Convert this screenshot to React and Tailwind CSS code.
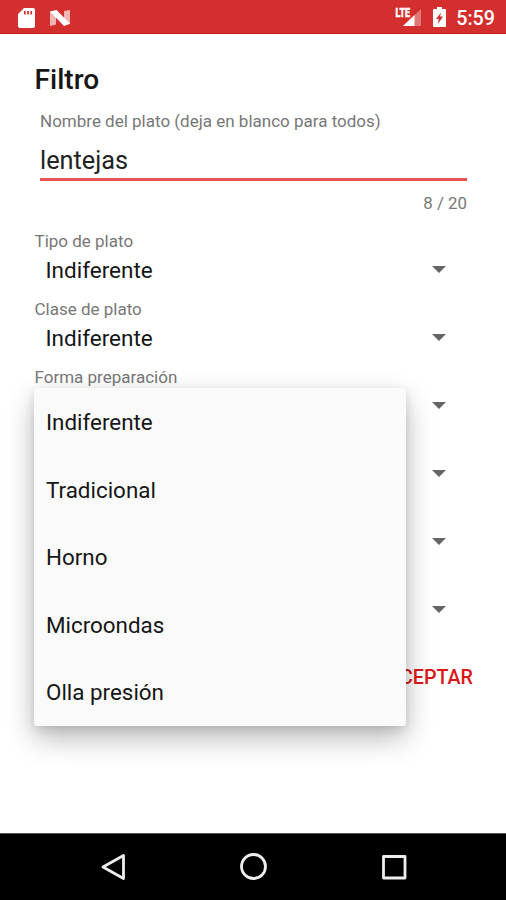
import React, { useState } from 'react';

const filters = [
  { label: 'Tipo de plato', value: 'Indiferente' },
  { label: 'Clase de plato', value: 'Indiferente' },
  { label: 'Forma preparación', value: '' },
  { label: '', value: '' },
  { label: '', value: '' },
  { label: '', value: '' }
];

const options = ['Indiferente', 'Tradicional', 'Horno', 'Microondas', 'Olla presión'];

const StatusBar = () => (
  <div className="h-[34px] shrink-0 bg-[#d32f2f] border-b border-[#c41f1f] text-white flex items-center justify-between pl-[17px] pr-[11px]">
    <div className="flex items-center gap-[13px] pt-[2px]">
      <svg width="19" height="22" viewBox="0 0 19 22">
        <path fillRule="evenodd" fill="currentColor" d="M7 1h9a2 2 0 0 1 2 2v16a2 2 0 0 1-2 2H3a2 2 0 0 1-2-2V7zM7 4v3.500h1.700V4zM10.200 4v3.500h1.700V4zM13.400 4v3.500h1.700V4z" />
      </svg>
      <svg width="22" height="18" viewBox="0 0 22 18">
        <path fill="currentColor" opacity="0.65" d="M1 2.500l6-1v14l-6 1.500zM15 2l6-1v14l-6 1.500z" />
        <path fill="currentColor" d="M1 2.500L7.500 1 21 14.500 15 17z" />
      </svg>
    </div>
    <div className="flex items-center">
      <svg width="28" height="24" viewBox="0 0 28 24">
        <path fill="currentColor" opacity="0.35" d="M27 4v17H9z" />
        <path fill="currentColor" d="M20.500 10v11H9z" />
        <rect width="17" height="12.500" fill="#d32f2f" />
        <text x="1.500" y="11.500" fontSize="12.500" fontWeight="900" fill="currentColor" stroke="currentColor" strokeWidth="0.4" textLength="14.500" lengthAdjust="spacingAndGlyphs" fontFamily="Roboto, sans-serif">LTE</text>
      </svg>
      <svg className="ml-[10px]" width="15" height="22" viewBox="0 0 15 22">
        <path fill="currentColor" d="M5 1h5v2h3a1 1 0 0 1 1 1v16a1 1 0 0 1-1 1H2a1 1 0 0 1-1-1V4a1 1 0 0 1 1-1h3z" />
        <path fill="#d32f2f" d="M9 6.500L4 13h2.800l-.8 5 5-7.500H8z" />
      </svg>
      <span className="ml-[9px] text-[19.700px] leading-6 font-medium relative top-[2px]">5:59</span>
    </div>
  </div>
);

const Caret = () => (
  <svg width="14" height="7" viewBox="0 0 14 7">
    <path d="M0 0h14L7 7z" fill="#666" />
  </svg>
);

const NavBar = () => (
  <div className="h-[67px] shrink-0 bg-black border-t border-[#555] flex items-center justify-between pl-[100px] pr-[98px]">
    <svg width="28" height="30" viewBox="0 0 28 30" fill="none" stroke="#eee" strokeWidth="2.800" strokeLinejoin="round">
      <path d="M23.500 3.500v23L3 15z" />
    </svg>
    <svg width="30" height="30" viewBox="0 0 30 30" fill="none" stroke="#eee" strokeWidth="2.800">
      <circle cx="14.500" cy="14.500" r="12" />
    </svg>
    <svg width="28" height="28" viewBox="0 0 28 28" fill="none" stroke="#eee" strokeWidth="2.800" strokeLinejoin="round">
      <rect x="3.500" y="3.500" width="21.500" height="21.500" />
    </svg>
  </div>
);

const App = () => {
  const [name, setName] = useState('lentejas');

  return (
    <div className="w-[506px] h-[900px] flex flex-col bg-white overflow-hidden font-['Roboto',sans-serif]">
      <StatusBar />

      <div className="flex-1 pl-[34.500px] pr-[33px] pt-[30px]">
        <h1 className="text-[28.100px] leading-8 font-medium text-[#161616]">Filtro</h1>

        {/* Dish name */}
        <div className="pl-[5.500px] pr-[6px] h-[135px]">
          <label className="block pt-[15px] text-[17px] leading-5 text-[#777]">Nombre del plato (deja en blanco para todos)</label>
          <input
            value={name}
            maxLength={20}
            onChange={(e) => setName(e.target.value)}
            className="mt-[9px] block w-full h-[41px] pt-[2px] text-[25.300px] text-[#222] border-b-[3px] border-[#e9524f] outline-none"
          />
          <p className="mt-[12px] text-right text-[16.870px] leading-5 text-[#777]">{name.length} / 20</p>
        </div>

        {/* Spinners */}
        <div className="relative">
          {filters.map((f, i) => (
            <div key={i} className="h-[68px]">
              <div className="h-5 text-[17px] leading-5 text-[#777]">{f.label}</div>
              <div className="h-9 flex items-center justify-between pl-[11px] pr-[27px] text-[22.500px] text-[#161616]">
                <span className="pt-[3px]">{f.value}</span>
                <Caret />
              </div>
            </div>
          ))}

          <ul className="absolute left-[-0.500px] top-[157px] w-[371.500px] h-[337.500px] rounded-[3px] bg-[#fafafa] shadow-[0_12px_28px_rgba(0,0,0,0.28),0_3px_10px_rgba(0,0,0,0.1)]">
            {options.map((o) => (
              <li key={o} className="h-[67.500px] flex items-center pt-[3px] pl-[12px] text-[22.400px] text-[#161616]">{o}</li>
            ))}
          </ul>
        </div>

        <div className="h-[78px] flex items-center justify-end">
          <button className="text-[19.700px] font-medium text-[#dc1717]">ACEPTAR</button>
        </div>
      </div>

      <NavBar />
    </div>
  );
};

export default App;
